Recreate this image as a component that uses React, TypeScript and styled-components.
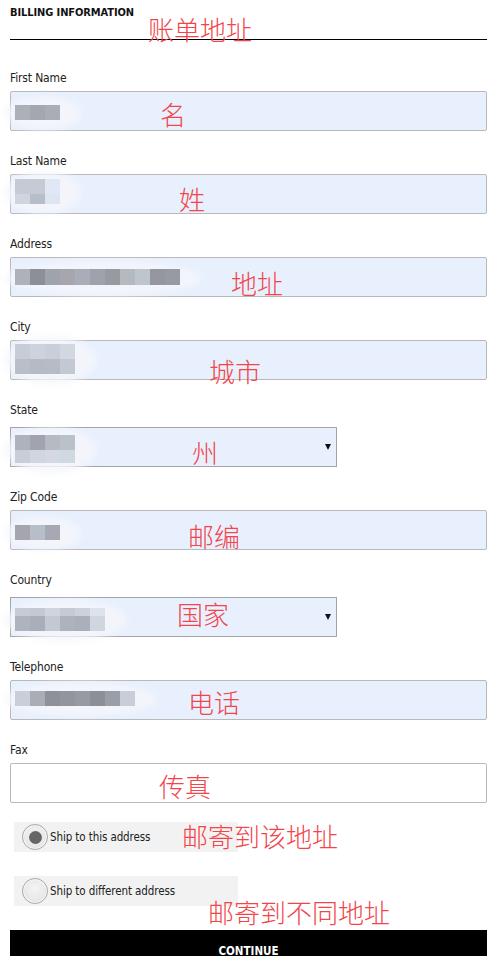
import React from "react";
import styled, { createGlobalStyle } from "styled-components";

const NARROW = `"Liberation Sans Narrow", "Arial Narrow", "DejaVu Sans Condensed", sans-serif`;

const GlobalStyle = createGlobalStyle`
  html, body { margin: 0; padding: 0; background: #fff; }
  body { font-family: ${NARROW}; }
  * { box-sizing: border-box; }
`;

const Page = styled.div`
  position: relative;
  width: 500px;
  height: 956px;
  overflow: hidden;
  padding: 0 13px 0 10px;
`;

const Header = styled.h2`
  margin: 0;
  padding-top: 5px;
  height: 40px;
  border-bottom: 1px solid #000;
  font: bold 11px/16px ${NARROW};
  letter-spacing: -0.1px;
  color: #111;
  text-transform: uppercase;
`;

const Form = styled.div`
  display: flex;
  flex-direction: column;
  padding-top: 30px;
`;

const Field = styled.div`
  display: flex;
  flex-direction: column;
  margin-bottom: 22px;
`;

const Label = styled.label<{ $select?: boolean }>`
  display: block;
  height: 16px;
  font: 12px/16px ${NARROW};
  letter-spacing: -0.15px;
  color: #222;
  margin-bottom: ${(p) => (p.$select ? "9px" : "5px")};
`;

const InputBox = styled.div<{ $filled?: boolean }>`
  position: relative;
  height: 40px;
  width: 100%;
  border: 1px solid #b9b9b9;
  border-radius: 2px;
  background: ${(p) => (p.$filled ? "#e8f0fe" : "#fff")};
`;

const SelectBox = styled.div`
  position: relative;
  height: 40px;
  width: 327px;
  border: 1px solid #a3a3a3;
  background: #e8f0fe;
  display: flex;
  align-items: center;
  justify-content: flex-end;
  padding-right: 5px;
`;

const Caret = styled.span`
  width: 0;
  height: 0;
  border-left: 3.5px solid transparent;
  border-right: 3.5px solid transparent;
  border-top: 6px solid #111;
`;

const Blur = styled.div<{ $top: number }>`
  position: absolute;
  left: 4px;
  top: ${(p) => p.$top}px;
  display: flex;
  flex-direction: column;
`;

const Haze = styled.div`
  position: absolute;
  left: -10px;
  top: -8px;
  right: -22px;
  bottom: -10px;
  border-radius: 50%;
  background: rgba(244, 246, 250, 0.85);
  filter: blur(3px);
`;

const PixRow = styled.div<{ $h: number }>`
  position: relative;
  display: flex;
  height: ${(p) => p.$h}px;
`;

const Pix = styled.span`
  width: 15px;
  height: 100%;
`;

const RadioRow = styled.div`
  display: flex;
  align-items: center;
  gap: 2px;
  width: 224px;
  height: 30px;
  margin-left: 4px;
  padding-left: 8px;
  background: #f2f2f2;
  font: 11.5px/16px ${NARROW};
  letter-spacing: -0.1px;
  color: #222;
`;

const RadioCircle = styled.span<{ $checked?: boolean }>`
  flex: none;
  width: 26px;
  height: 26px;
  border-radius: 50%;
  border: 1px solid #a9a9a9;
  background: radial-gradient(circle at 50% 40%, #f4f4f4 0%, #e0e0e0 100%);
  box-shadow: inset 0 0 0 1px #fafafa;
  display: flex;
  align-items: center;
  justify-content: center;
  &::after {
    content: "";
    display: ${(p) => (p.$checked ? "block" : "none")};
    width: 13px;
    height: 13px;
    border-radius: 50%;
    background: #666;
  }
`;

const Radios = styled.div`
  display: flex;
  flex-direction: column;
  gap: 24px;
  margin-top: -3px;
`;

const ContinueButton = styled.button`
  margin-top: 24px;
  width: 100%;
  height: 42px;
  border: 0;
  border-radius: 0;
  background: #000;
  color: #fff;
  font: bold 11.5px/16px ${NARROW};
  text-transform: uppercase;
  cursor: pointer;
`;

const Note = styled.span<{ $x: number; $y: number }>`
  position: absolute;
  left: ${(p) => p.$x}px;
  top: ${(p) => p.$y}px;
  font: 300 26px/26px "Noto Sans CJK SC", sans-serif;
  color: #f2454a;
  white-space: nowrap;
  pointer-events: none;
`;

type Pixels = { top: number; rows: { h: number; c: string[] }[] };

type FieldDef = {
  label: string;
  select?: boolean;
  filled?: boolean;
  pixels?: Pixels;
};

const fields: FieldDef[] = [
  {
    label: "First Name",
    filled: true,
    pixels: { top: 13, rows: [{ h: 15, c: ["#acb0b8", "#a3a8b0", "#a9aeb6"] }] },
  },
  {
    label: "Last Name",
    filled: true,
    pixels: {
      top: 4,
      rows: [
        { h: 15, c: ["#c5cad4", "#c5cad4", "#e0e8f6"] },
        { h: 10, c: ["#cfd4de", "#b8bec9", "#dde5f3"] },
      ],
    },
  },
  {
    label: "Address",
    filled: true,
    pixels: {
      top: 11,
      rows: [
        {
          h: 16,
          c: ["#aeb1b8", "#8c8f96", "#9fa3ac", "#a6a7ae", "#a8adb8", "#9ea3ab", "#969ba2", "#b5b9c0", "#bfc5cd", "#95979f", "#969aa2"],
        },
      ],
    },
  },
  {
    label: "City",
    filled: true,
    pixels: {
      top: 3,
      rows: [
        { h: 15, c: ["#c7ccd6", "#cdd2dc", "#c9ced8", "#d2d7e1"] },
        { h: 15, c: ["#b9bec8", "#b5bac4", "#b6bbc5", "#c3c8d2"] },
      ],
    },
  },
  {
    label: "State",
    select: true,
    pixels: {
      top: 7,
      rows: [
        { h: 15, c: ["#adb2bc", "#9fa4ae", "#b6bac2", "#b9c1c9"] },
        { h: 13, c: ["#c8cdd7", "#d0d5df", "#d3d8e2", "#d0d8e2"] },
      ],
    },
  },
  {
    label: "Zip Code",
    filled: true,
    pixels: { top: 14, rows: [{ h: 15, c: ["#a5a6ad", "#b6bec9", "#a6a9b3"] }] },
  },
  {
    label: "Country",
    select: true,
    pixels: {
      top: 10,
      rows: [
        { h: 8, c: ["#c6cbd5", "#c3c8d2", "#cfd4de", "#c5cad4", "#ccd1db", "#dde2ec"] },
        { h: 15, c: ["#aeb3bd", "#a9aeb8", "#c3c8d2", "#adb2bc", "#aab0ba", "#d0d5df"] },
      ],
    },
  },
  {
    label: "Telephone",
    filled: true,
    pixels: {
      top: 10,
      rows: [{ h: 15, c: ["#c9ced8", "#a9adb5", "#8e9199", "#92959d", "#969aa2", "#8c8f97", "#9a9ea6", "#c8cdd7"] }],
    },
  },
  { label: "Fax" },
];

const notes: { text: string; x: number; y: number }[] = [
  { text: "账单地址", x: 148, y: 16 },
  { text: "名", x: 160, y: 101 },
  { text: "姓", x: 179, y: 186 },
  { text: "地址", x: 231, y: 270 },
  { text: "城市", x: 209, y: 358 },
  { text: "州", x: 192, y: 439 },
  { text: "邮编", x: 188, y: 523 },
  { text: "国家", x: 177, y: 601 },
  { text: "电话", x: 188, y: 689 },
  { text: "传真", x: 159, y: 773 },
  { text: "邮寄到该地址", x: 182, y: 823 },
  { text: "邮寄到不同地址", x: 208, y: 899 },
];

function Pixelated({ pixels }: { pixels: Pixels }) {
  return (
    <Blur $top={pixels.top}>
      <Haze />
      {pixels.rows.map((r, i) => (
        <PixRow key={i} $h={r.h}>
          {r.c.map((c, j) => (
            <Pix key={j} style={{ background: c }} />
          ))}
        </PixRow>
      ))}
    </Blur>
  );
}

export default function App() {
  return (
    <>
      <GlobalStyle />
      <Page>
        <Header>Billing Information</Header>
        <Form>
          {fields.map((f) => (
            <Field key={f.label}>
              <Label $select={f.select}>{f.label}</Label>
              {f.select ? (
                <SelectBox>
                  {f.pixels && <Pixelated pixels={f.pixels} />}
                  <Caret />
                </SelectBox>
              ) : (
                <InputBox $filled={f.filled}>
                  {f.pixels && <Pixelated pixels={f.pixels} />}
                </InputBox>
              )}
            </Field>
          ))}
          <Radios>
            <RadioRow>
              <RadioCircle $checked />
              Ship to this address
            </RadioRow>
            <RadioRow>
              <RadioCircle />
              Ship to different address
            </RadioRow>
          </Radios>
          <ContinueButton>Continue</ContinueButton>
        </Form>
        {notes.map((n) => (
          <Note key={n.text} $x={n.x} $y={n.y}>
            {n.text}
          </Note>
        ))}
      </Page>
    </>
  );
}
